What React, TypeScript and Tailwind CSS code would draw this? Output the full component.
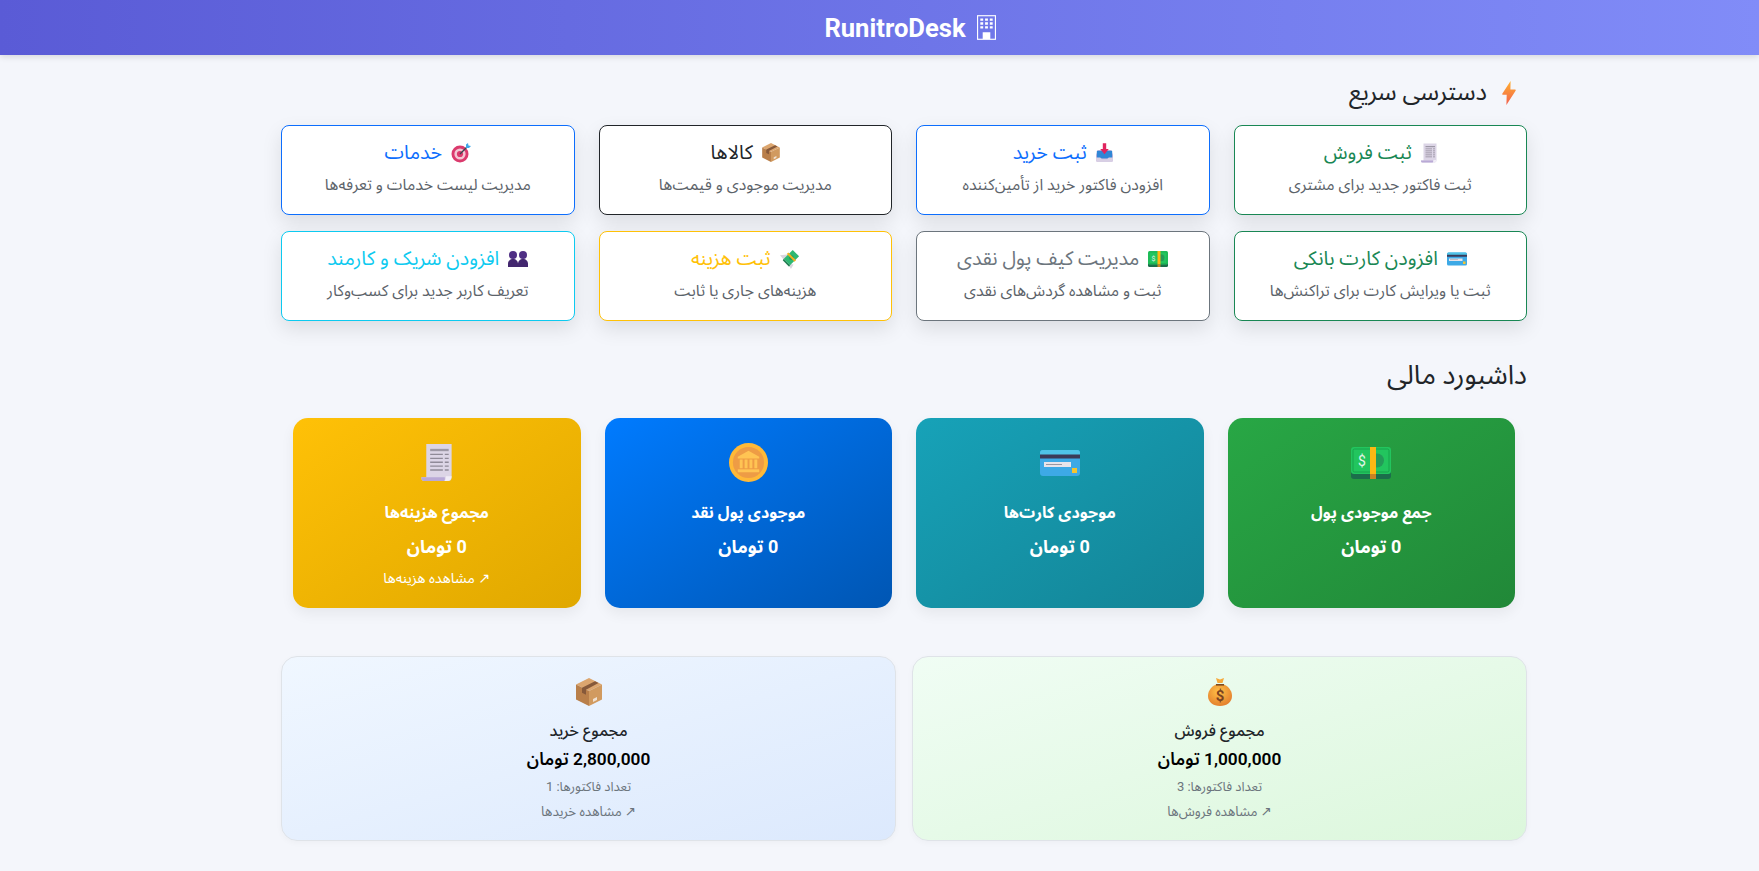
import type { ReactNode } from "react";

const font = "font-['Roboto','Noto_Sans_Arabic','Segoe_UI','DejaVu_Sans',sans-serif]";

function Bolt({ className }: { className: string }) {
  return (
    <svg viewBox="0 0 14 24" className={className}>
      <defs>
        <linearGradient id="bolt" x1="0.5" y1="0" x2="0.5" y2="1">
          <stop offset="0" stopColor="#ffb02e" />
          <stop offset="1" stopColor="#f2604f" />
        </linearGradient>
      </defs>
      <path d="M8.6 0 0.4 12.4c-.4.7 0 1.3.7 1.3h3.6L4.4 24 13.6 9.8c.4-.7 0-1.3-.7-1.3H8.4Z" fill="url(#bolt)" />
    </svg>
  );
}

function Receipt({ className }: { className: string }) {
  return (
    <svg viewBox="0 0 32 40" className={className}>
      <path d="M5 1h26v34a4 4 0 0 1-4 4H3a3 3 0 0 1-3-3v-1h5Z" fill="#dcd5e6" />
      <path d="M0 35h24v4H3a3 3 0 0 1-3-3Z" fill="#b9a9d6" />
      <path d="M22 39c3 0 3-2 3-5h6c0 3-2 5-5 5Z" fill="#f1edf7" />
      <path d="M9 6h19v2.4H9Z" fill="#9d98a6" />
      <path d="M9 11h13v1.4H9ZM24 11h4v1.4h-4ZM9 15h13v1.4H9ZM24 15h4v1.4h-4ZM9 19h13v1.4H9ZM24 19h4v1.4h-4ZM9 23h13v1.4H9ZM24 23h4v1.4h-4ZM9 27h13v1.4H9ZM24 27h4v1.4h-4Z" fill="#8f8a98" />
    </svg>
  );
}

function Inbox({ className }: { className: string }) {
  return (
    <svg viewBox="0 0 20 22" className={className}>
      <path d="M2 8h16l2 6v6a2 2 0 0 1-2 2H2a2 2 0 0 1-2-2v-6Z" fill="#c9b6dc" />
      <path d="M1 9h18v9H1Z" fill="#2f86d6" />
      <path d="M0 17h5l2 2h6l2-2h5v3a2 2 0 0 1-2 2H2a2 2 0 0 1-2-2Z" fill="#d8cfe4" />
      <path d="M8 0h4v7h3l-5 6-5-6h3Z" fill="#e0245e" />
    </svg>
  );
}

function PackageBox({ className }: { className: string }) {
  return (
    <svg viewBox="0 0 26 28" className={className}>
      <path d="M13 0 26 6.5 13 13 0 6.5Z" fill="#dca66f" />
      <path d="M0 6.5 13 13v15L0 21.5Z" fill="#b97f4a" />
      <path d="M26 6.5 13 13v15l13-6.5Z" fill="#d19a5f" />
      <path d="M19 3.2 6 9.7v5l4 2v-5L22.5 5Z" fill="#86593a" />
      <path d="M17 21l4-2v3l-4 2Z" fill="#efe0d0" />
    </svg>
  );
}

function Target({ className }: { className: string }) {
  return (
    <svg viewBox="0 0 20 20" className={className}>
      <circle cx="9" cy="11" r="8.5" fill="#db3a6d" />
      <circle cx="9" cy="11" r="5.6" fill="#f3c6d3" />
      <circle cx="9" cy="11" r="3.1" fill="#db3a6d" />
      <path d="M9 11 17 3" stroke="#37474f" strokeWidth="1.2" />
      <path d="M15 1.5 17 0l.5 2.5L20 3l-2 2h-3Z" fill="#3fa7e8" />
    </svg>
  );
}

function Card({ className }: { className: string }) {
  return (
    <svg viewBox="0 0 40 26" className={className}>
      <rect x="0" y="0" width="40" height="26" rx="3" fill="#3da9e6" />
      <path d="M3 0h34a3 3 0 0 1 3 3v2H0V3a3 3 0 0 1 3-3Z" fill="#4fc3e8" />
      <path d="M0 4.500h40v4H0Z" fill="#3b3a58" />
      <path d="M4 12h27v5H4Z" fill="#e8e4ea" />
      <path d="M6 14h16v1H6Z" fill="#9b97a2" />
      <path d="M32 18h5v5h-5Z" fill="#f4c430" />
    </svg>
  );
}

function Cash({ className }: { className: string }) {
  return (
    <svg viewBox="0 0 40 32" className={className}>
      <path d="M0 23h40v6a3 3 0 0 1-3 3H3a3 3 0 0 1-3-3Z" fill="#1b6e4b" />
      <rect width="40" height="27" rx="3" fill="#22c55e" />
      <rect x="2" y="2" width="36" height="23" rx="1.5" fill="none" stroke="#17a34a" strokeWidth="1" />
      <circle cx="26" cy="13.5" r="7" fill="#249a58" />
      <text x="11" y="19" fontSize="14" textAnchor="middle" fill="#e4f5e8" fontFamily="Roboto, sans-serif">$</text>
      <path d="M19 0h6v27h-6Z" fill="#fdb813" />
      <path d="M19 27h6v5h-6Z" fill="#c98324" />
    </svg>
  );
}

function FlyingMoney({ className }: { className: string }) {
  return (
    <svg viewBox="0 0 22 22" className={className}>
      <path d="M0 7 8 6 6 14ZM15 17l-6-1 3 6Z" fill="#d9d6de" />
      <path d="M4 11 14 1l7 7-10 10Z" fill="#2eb872" />
      <path d="M4 11l7 7-1 1.500L3 12.500Z" fill="#1c7d4f" />
      <circle cx="12.500" cy="9.500" r="2.600" fill="#1f9d5c" />
      <path d="M7.500 5.500 16 14l1.600-1.600-8.500-8.500Z" fill="#f2b01e" />
    </svg>
  );
}

function People({ className }: { className: string }) {
  return (
    <svg viewBox="0 0 20 16" className={className}>
      <circle cx="5" cy="4" r="4" fill="#4f2f84" />
      <circle cx="15" cy="4" r="4" fill="#4f2f84" />
      <path d="M0 16v-3c0-3 2-5 5-5s5 2 5 5v3Z" fill="#43276f" />
      <path d="M10 16v-3c0-3 2-5 5-5s5 2 5 5v3Z" fill="#43276f" />
    </svg>
  );
}

function BankCoin({ className }: { className: string }) {
  return (
    <svg viewBox="0 0 40 40" className={className}>
      <circle cx="20" cy="20" r="20" fill="#ffb938" />
      <circle cx="20" cy="20" r="16" fill="#ee9c45" />
      <path d="M20 8 31 14v2H9v-2Z" fill="#ffc453" />
      <path d="M11 17h3v9h-3ZM16 17h3v9h-3ZM21 17h3v9h-3ZM26 17h3v9h-3Z" fill="#ffc453" />
      <path d="M9 27h22v3H9Z" fill="#ffc453" />
    </svg>
  );
}

function MoneyBag({ className }: { className: string }) {
  return (
    <svg viewBox="0 0 24 28" className={className}>
      <defs>
        <radialGradient id="bag" cx="0.45" cy="0.35" r="0.75">
          <stop offset="0" stopColor="#ffc247" />
          <stop offset="1" stopColor="#e0762a" />
        </radialGradient>
      </defs>
      <path d="M9 6 C2 9 0 14 0 18c0 6 5 10 12 10s12-4 12-10c0-4-2-9-9-12Z" fill="url(#bag)" />
      <path d="M8 6h8v1.600H8Z" fill="#7a4a21" />
      <path d="M8 0l4 1.400L16 0l-1.500 5h-5Z" fill="#f6a93b" />
      <text x="12" y="23" fontSize="15" fontWeight="700" textAnchor="middle" fill="#7a4321" fontFamily="Roboto, sans-serif">$</text>
    </svg>
  );
}

function Building({ className }: { className: string }) {
  return (
    <svg viewBox="0 0 20 26" className={className} fill="none">
      <rect x="0.6" y="0.6" width="18.8" height="24.8" stroke="#fff" strokeWidth="1.2" />
      <path d="M3.500 3.500h3v2.400h-3ZM8.500 3.500h3v2.400h-3ZM13.500 3.500h3v2.400h-3ZM3.500 7.600h3V10h-3ZM8.500 7.600h3V10h-3ZM13.500 7.600h3V10h-3ZM3.500 11.700h3v2.400h-3ZM8.500 11.700h3v2.400h-3ZM13.500 11.700h3v2.400h-3ZM6 18h8v7H6Z" fill="#fff" />
    </svg>
  );
}

function QuickCard({ icon, title, text, border, color }: { icon: ReactNode; title: string; text: string; border: string; color: string }) {
  return (
    <div className={`bg-white border rounded-lg h-[90px] flex flex-col items-center pt-[12px] shadow-[0_8px_20px_rgba(0,0,0,0.1)] ${border}`}>
      <div className={`flex items-center gap-[9px] text-[19.7px] leading-[29px] ${color}`}>
        {icon}
        <span>{title}</span>
      </div>
      <p className="text-[15.8px] leading-[23px] mt-[6px] text-[#5c636a]">{text}</p>
    </div>
  );
}

function StatCard({ icon, title, bg, link }: { icon: ReactNode; title: string; bg: string; link?: string }) {
  return (
    <div className={`h-[190px] rounded-[15px] text-white flex flex-col items-center shadow-[0_6px_14px_rgba(0,0,0,0.06)] ${bg}`}>
      <div className="h-[39px] mt-[25px] flex items-center justify-center">{icon}</div>
      <h3 className="mt-[19px] text-[16px] leading-[24px] font-bold">{title}</h3>
      <p className="mt-[8px] text-[18px] leading-[27px] font-bold">0 تومان</p>
      {link && <span className="mt-[8px] text-[14.4px] leading-[21px]">↗ {link}</span>}
    </div>
  );
}

function TotalCard({ icon, title, amount, count, link, bg }: { icon: ReactNode; title: string; amount: string; count: string; link: string; bg: string }) {
  return (
    <div className={`h-[185px] rounded-2xl border border-[#dfe3e8] flex flex-col items-center shadow-[0_2px_6px_rgba(0,0,0,0.03)] ${bg}`}>
      <div className="h-[28px] mt-[21px] flex items-center justify-center">{icon}</div>
      <h4 className="mt-[13px] text-[16px] leading-[24px] font-medium text-[#212529]">{title}</h4>
      <p className="mt-[3px] text-[17.3px] leading-[26px] font-semibold text-black">{amount}</p>
      <p className="mt-[5px] text-[13px] leading-[20px] text-[#6c757d]">{count}</p>
      <span className="mt-[5px] text-[13.3px] leading-[20px] text-[#6c757d]">↗ {link}</span>
    </div>
  );
}

export default function App() {
  return (
    <div dir="rtl" className={`min-h-[871px] bg-[#f4f6fb] text-[#212529] ${font}`}>
      <header className="h-[55px] pl-[61px] bg-gradient-to-r from-[#5a5bd6] to-[#818cf8] flex items-center justify-center shadow-[0_2px_6px_rgba(0,0,0,0.12)]">
        <div dir="ltr" className="flex items-center gap-[11px] text-white">
          <span className="text-[25.6px] font-bold leading-[38px]">RunitroDesk</span>
          <Building className="w-[19px] h-[25px]" />
        </div>
      </header>

      <main className="w-[1246px] mr-[232px]">
        <h2 className="mt-[20px] pr-[11px] flex items-center gap-[15px] text-[24px] leading-[35px]">
          <Bolt className="w-[14px] h-[24px]" />
          دسترسی سریع
        </h2>
        <div className="mt-[15px] grid grid-cols-4 gap-x-[24px] gap-y-[16px]">
          <QuickCard icon={<Receipt className="w-[16px] h-[20px]" />} title="ثبت فروش" text="ثبت فاکتور جدید برای مشتری" border="border-[#198754]" color="text-[#198754]" />
          <QuickCard icon={<Inbox className="w-[17px] h-[19px]" />} title="ثبت خرید" text="افزودن فاکتور خرید از تأمین‌کننده" border="border-[#0d6efd]" color="text-[#0d6efd]" />
          <QuickCard icon={<PackageBox className="w-[18px] h-[19px]" />} title="کالاها" text="مدیریت موجودی و قیمت‌ها" border="border-[#212529]" color="text-[#212529]" />
          <QuickCard icon={<Target className="w-[20px] h-[20px]" />} title="خدمات" text="مدیریت لیست خدمات و تعرفه‌ها" border="border-[#0d6efd]" color="text-[#0d6efd]" />
          <QuickCard icon={<Card className="w-[20px] h-[14px]" />} title="افزودن کارت بانکی" text="ثبت یا ویرایش کارت برای تراکنش‌ها" border="border-[#198754]" color="text-[#198754]" />
          <QuickCard icon={<Cash className="w-[20px] h-[16px]" />} title="مدیریت کیف پول نقدی" text="ثبت و مشاهده گردش‌های نقدی" border="border-[#6c757d]" color="text-[#6c757d]" />
          <QuickCard icon={<FlyingMoney className="w-[20px] h-[20px]" />} title="ثبت هزینه" text="هزینه‌های جاری یا ثابت" border="border-[#ffc107]" color="text-[#ffc107]" />
          <QuickCard icon={<People className="w-[20px] h-[16px]" />} title="افزودن شریک و کارمند" text="تعریف کاربر جدید برای کسب‌وکار" border="border-[#0dcaf0]" color="text-[#0dcaf0]" />
        </div>

        <h2 className="mt-[33px] text-[27px] leading-[42px]">داشبورد مالی</h2>

        <div className="mt-[22px] px-[12px] grid grid-cols-4 gap-[24px]">
          <StatCard icon={<Cash className="w-[40px] h-[32px]" />} title="جمع موجودی پول" bg="bg-gradient-to-br from-[#28a745] to-[#218838]" />
          <StatCard icon={<Card className="w-[40px] h-[26px]" />} title="موجودی کارت‌ها" bg="bg-gradient-to-br from-[#17a2b8] to-[#138496]" />
          <StatCard icon={<BankCoin className="w-[39px] h-[39px]" />} title="موجودی پول نقد" bg="bg-gradient-to-br from-[#007bff] to-[#0056b3]" />
          <StatCard icon={<Receipt className="w-[32px] h-[39px]" />} title="مجموع هزینه‌ها" bg="bg-gradient-to-br from-[#ffc107] to-[#e0a800]" link="مشاهده هزینه‌ها" />
        </div>

        <div className="mt-[48px] grid grid-cols-2 gap-[16px]">
          <TotalCard icon={<MoneyBag className="w-[24px] h-[28px]" />} title="مجموع فروش" amount="1,000,000 تومان" count="تعداد فاکتورها: 3" link="مشاهده فروش‌ها" bg="bg-gradient-to-br from-[#f0fdf4] to-[#dcf7dc]" />
          <TotalCard icon={<PackageBox className="w-[26px] h-[28px]" />} title="مجموع خرید" amount="2,800,000 تومان" count="تعداد فاکتورها: 1" link="مشاهده خریدها" bg="bg-gradient-to-br from-[#f0f7ff] to-[#dce9fd]" />
        </div>
      </main>
    </div>
  );
}
